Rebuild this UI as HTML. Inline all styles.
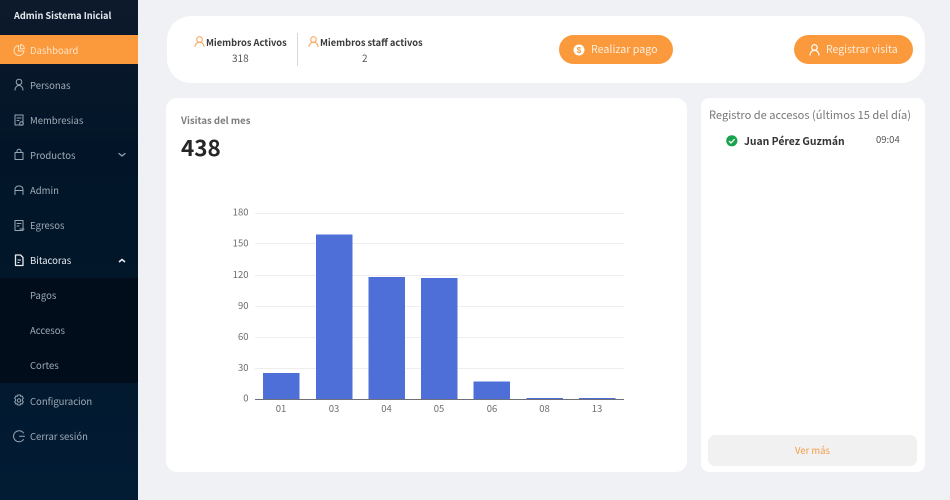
<!DOCTYPE html>
<html lang="es">
<head>
<meta charset="utf-8">
<title>Dashboard</title>
<style>
*{box-sizing:border-box;margin:0;padding:0}
html,body{width:950px;height:500px;overflow:hidden;background:#eff1f5;font-family:"Noto Sans CJK JP","Liberation Sans",sans-serif}
.a{position:absolute;white-space:nowrap}
#side{position:absolute;left:0;top:0;width:138px;height:500px;background:linear-gradient(180deg,#0d1a2c 0,#021528 30%,#02172b 60%,#021c35 100%)}
.m{position:absolute;left:30px;font-size:9.5px;line-height:14px;color:#a2acb8}
svg{position:absolute;overflow:visible}
.ic{fill:none;stroke:#9aa5b2;stroke-width:1;stroke-linecap:round;stroke-linejoin:round}
.card{position:absolute;background:#fff}
.grid{stroke:#eeeeee;stroke-width:1}
.bar{fill:#4e6fd8}
.t{font-family:"Noto Sans CJK JP","Liberation Sans",sans-serif;font-size:9.5px;fill:#6e6e6e}
</style>
</head>
<body>
<div id="side">
  <div class="a" style="left:14px;top:8px;font-size:9.2px;line-height:14px;font-weight:bold;color:#e6eaef">Admin Sistema Inicial</div>
  <div class="a" style="left:0;top:35px;width:138px;height:29px;background:#fb9a3c"></div>
  <div class="a" style="left:0;top:278px;width:138px;height:105px;background:#010d1a"></div>

  <svg width="138" height="500" style="left:0;top:0">
    <g class="ic" style="stroke:#fde3c8">
      <path d="M18.500 45.500a5 5 0 1 0 5.500 5.500h-5.500z"/><path d="M20.500 44.500a4 4 0 0 1 3.800 4.200h-3.800z"/>
    </g>
    <g class="ic">
      <circle cx="19" cy="82" r="2.800"/><path d="M15 90c.4-3 1.800-4.500 4-4.500s3.600 1.500 4 4.500"/>
      <path d="M15 115h8v10h-8z"/><path d="M17 118h4M17 120.500h2"/><circle cx="21.500" cy="123.500" r="1.800"/>
      <path d="M15 152.500h8v7h-8zM17 152.500v-1.200a2 2 0 0 1 4 0v1.200"/>
      <path d="M15 194.500v-5a3.500 3.500 0 0 1 3.500-3.500h1a3.500 3.500 0 0 1 3.500 3.500v5M15 190.500h8"/>
      <path d="M15 220.500h8v10h-8z"/><path d="M17 223.500h4M17 226h2"/><path d="M20 229h4"/>
      <path d="M23.500 433a5.500 5.500 0 1 0 0 6.500"/><path d="M19.500 436.300h5"/>
      <circle cx="19" cy="400.500" r="1.700"/>
      <path d="M17.700 395h2.600l.4 1.400 1.400-.4 1.300 2.200-1 1 0 1.600 1 1-1.300 2.200-1.400-.4-.4 1.400h-2.600l-.4-1.400-1.400.4-1.300-2.200 1-1 0-1.600-1-1 1.300-2.200 1.400.4z"/>
      <path d="M119 153.500l3 2.500 3-2.500" stroke-width="1.200"/>
    </g>
    <path d="M15.500 255h5l2.500 2.500v8h-7.500z" fill="none" stroke="#e8ecf1" stroke-width="1.300" stroke-linejoin="round"/>
    <path d="M17.500 260h3.500M17.500 262.500h2" stroke="#e8ecf1" stroke-width="1.100"/>
    <path d="M119 262l3-2.500 3 2.500" fill="none" stroke="#e8ecf1" stroke-width="1.600"/>
  </svg>

  <div class="m a" style="top:43px;color:#fde3c8">Dashboard</div>
  <div class="m a" style="top:78px">Personas</div>
  <div class="m a" style="top:113px">Membresias</div>
  <div class="m a" style="top:148px">Productos</div>
  <div class="m a" style="top:183px">Admin</div>
  <div class="m a" style="top:218px">Egresos</div>
  <div class="m a" style="top:253px;color:#e8ecf1">Bitacoras</div>
  <div class="m a" style="top:288px">Pagos</div>
  <div class="m a" style="top:323px">Accesos</div>
  <div class="m a" style="top:358px">Cortes</div>
  <div class="m a" style="top:394px">Configuracion</div>
  <div class="m a" style="top:429px">Cerrar sesión</div>
</div>

<div class="card" style="left:167px;top:16px;width:758px;height:67px;border-radius:24px"></div>

<svg width="12" height="12" style="left:194px;top:36px" fill="none" stroke="#f8a860" stroke-width="1.100" stroke-linecap="round"><circle cx="5.500" cy="3.500" r="2.800"/><path d="M1 10.500c.5-3 2-4.300 4.500-4.300s4 1.300 4.500 4.300"/></svg>
<div class="a" style="left:206px;top:35px;font-size:9.3px;line-height:14px;font-weight:bold;color:#3a3a3a">Miembros Activos</div>
<div class="a" style="left:232px;top:51px;font-size:10px;line-height:14px;color:#555">318</div>
<div class="a" style="left:297px;top:33px;width:1px;height:33px;background:#d8d8d8"></div>
<svg width="12" height="12" style="left:308px;top:36px" fill="none" stroke="#f8a860" stroke-width="1.100" stroke-linecap="round"><circle cx="5.500" cy="3.500" r="2.800"/><path d="M1 10.500c.5-3 2-4.300 4.500-4.300s4 1.300 4.500 4.300"/></svg>
<div class="a" style="left:320px;top:35px;font-size:9.3px;line-height:14px;font-weight:bold;color:#3a3a3a">Miembros staff activos</div>
<div class="a" style="left:362px;top:51px;font-size:10px;line-height:14px;color:#555">2</div>

<div class="a" style="left:559px;top:35px;width:114px;height:29px;border-radius:15px;background:#fb9a3c"></div>
<svg width="12" height="12" style="left:573px;top:44px"><circle cx="6" cy="6" r="5.500" fill="#fff"/><text x="6" y="9" font-size="8" font-weight="bold" text-anchor="middle" fill="#fb9a3c" font-family="Liberation Sans">$</text></svg>
<div class="a" style="left:591px;top:42px;font-size:10.7px;line-height:16px;color:#fdeedd">Realizar pago</div>

<div class="a" style="left:794px;top:35px;width:119px;height:29px;border-radius:15px;background:#fb9a3c"></div>
<svg width="12" height="12" style="left:809px;top:44px" fill="none" stroke="#fff" stroke-width="1.200" stroke-linecap="round"><circle cx="5.500" cy="3.500" r="2.800"/><path d="M1 11c.5-3 2-4.600 4.500-4.600s4 1.600 4.500 4.600"/></svg>
<div class="a" style="left:826px;top:42px;font-size:10.5px;line-height:16px;color:#fdeedd">Registrar visita</div>

<div class="card" style="left:166px;top:98px;width:521px;height:374px;border-radius:11px"></div>
<div class="a" style="left:181px;top:113.500px;font-size:9.6px;line-height:13px;font-weight:bold;color:#7e7e7e">Visitas del mes</div>
<div class="a" style="left:181px;top:132px;font-size:22.500px;line-height:30px;font-weight:bold;color:#262626">438</div>

<svg width="521" height="374" style="left:166px;top:98px">
  <g transform="translate(-166,-98)">
    <path class="grid" d="M255 213.500H624M255 243.500H624M255 275.500H624M255 306.500H624M255 337.500H624M255 368.500H624"/>
    <rect class="bar" x="263" y="373" width="36.500" height="26"/>
    <rect class="bar" x="316" y="234.500" width="36.500" height="164.500"/>
    <rect class="bar" x="368.500" y="277" width="36.500" height="122"/>
    <rect class="bar" x="421" y="278" width="36.500" height="121"/>
    <rect class="bar" x="473.500" y="381.500" width="36.500" height="17.500"/>
    <rect class="bar" x="526.500" y="398" width="36.500" height="1"/>
    <rect class="bar" x="579" y="398" width="36.500" height="1"/>
    <path d="M255 399.500H624" stroke="#6e7079" stroke-width="1"/>
    <g class="t" text-anchor="end">
      <text x="248.500" y="215.500">180</text><text x="248.500" y="246.500">150</text><text x="248.500" y="278">120</text>
      <text x="248.500" y="309">90</text><text x="248.500" y="340">60</text><text x="248.500" y="371">30</text><text x="248.500" y="401.500">0</text>
    </g>
    <g class="t" text-anchor="middle">
      <text x="281" y="412">01</text><text x="334" y="412">03</text><text x="386.500" y="412">04</text>
      <text x="439" y="412">05</text><text x="492" y="412">06</text><text x="544.500" y="412">08</text><text x="597" y="412">13</text>
    </g>
  </g>
</svg>

<div class="card" style="left:701px;top:98px;width:224px;height:374px;border-radius:8px"></div>
<div class="a" style="left:709px;top:108px;font-size:11.1px;line-height:15px;color:#777">Registro de accesos (últimos 15 del día)</div>
<svg width="12" height="12" style="left:726px;top:135px"><circle cx="5.800" cy="5.800" r="5.600" fill="#16a34a"/><path d="M3 6l2 2 3.600-3.800" fill="none" stroke="#fff" stroke-width="1.300"/></svg>
<div class="a" style="left:744px;top:133px;font-size:10.400px;line-height:15px;font-weight:bold;color:#333">Juan Pérez Guzmán</div>
<div class="a" style="left:876px;top:132px;font-size:9.500px;line-height:14px;color:#555">09:04</div>
<div class="a" style="left:708px;top:435px;width:209px;height:31px;border-radius:7px;background:#f1f1f1"></div>
<div class="a" style="left:708px;top:443.500px;width:209px;text-align:center;font-size:9.500px;line-height:13px;color:#f59a47">Ver más</div>
</body>
</html>
